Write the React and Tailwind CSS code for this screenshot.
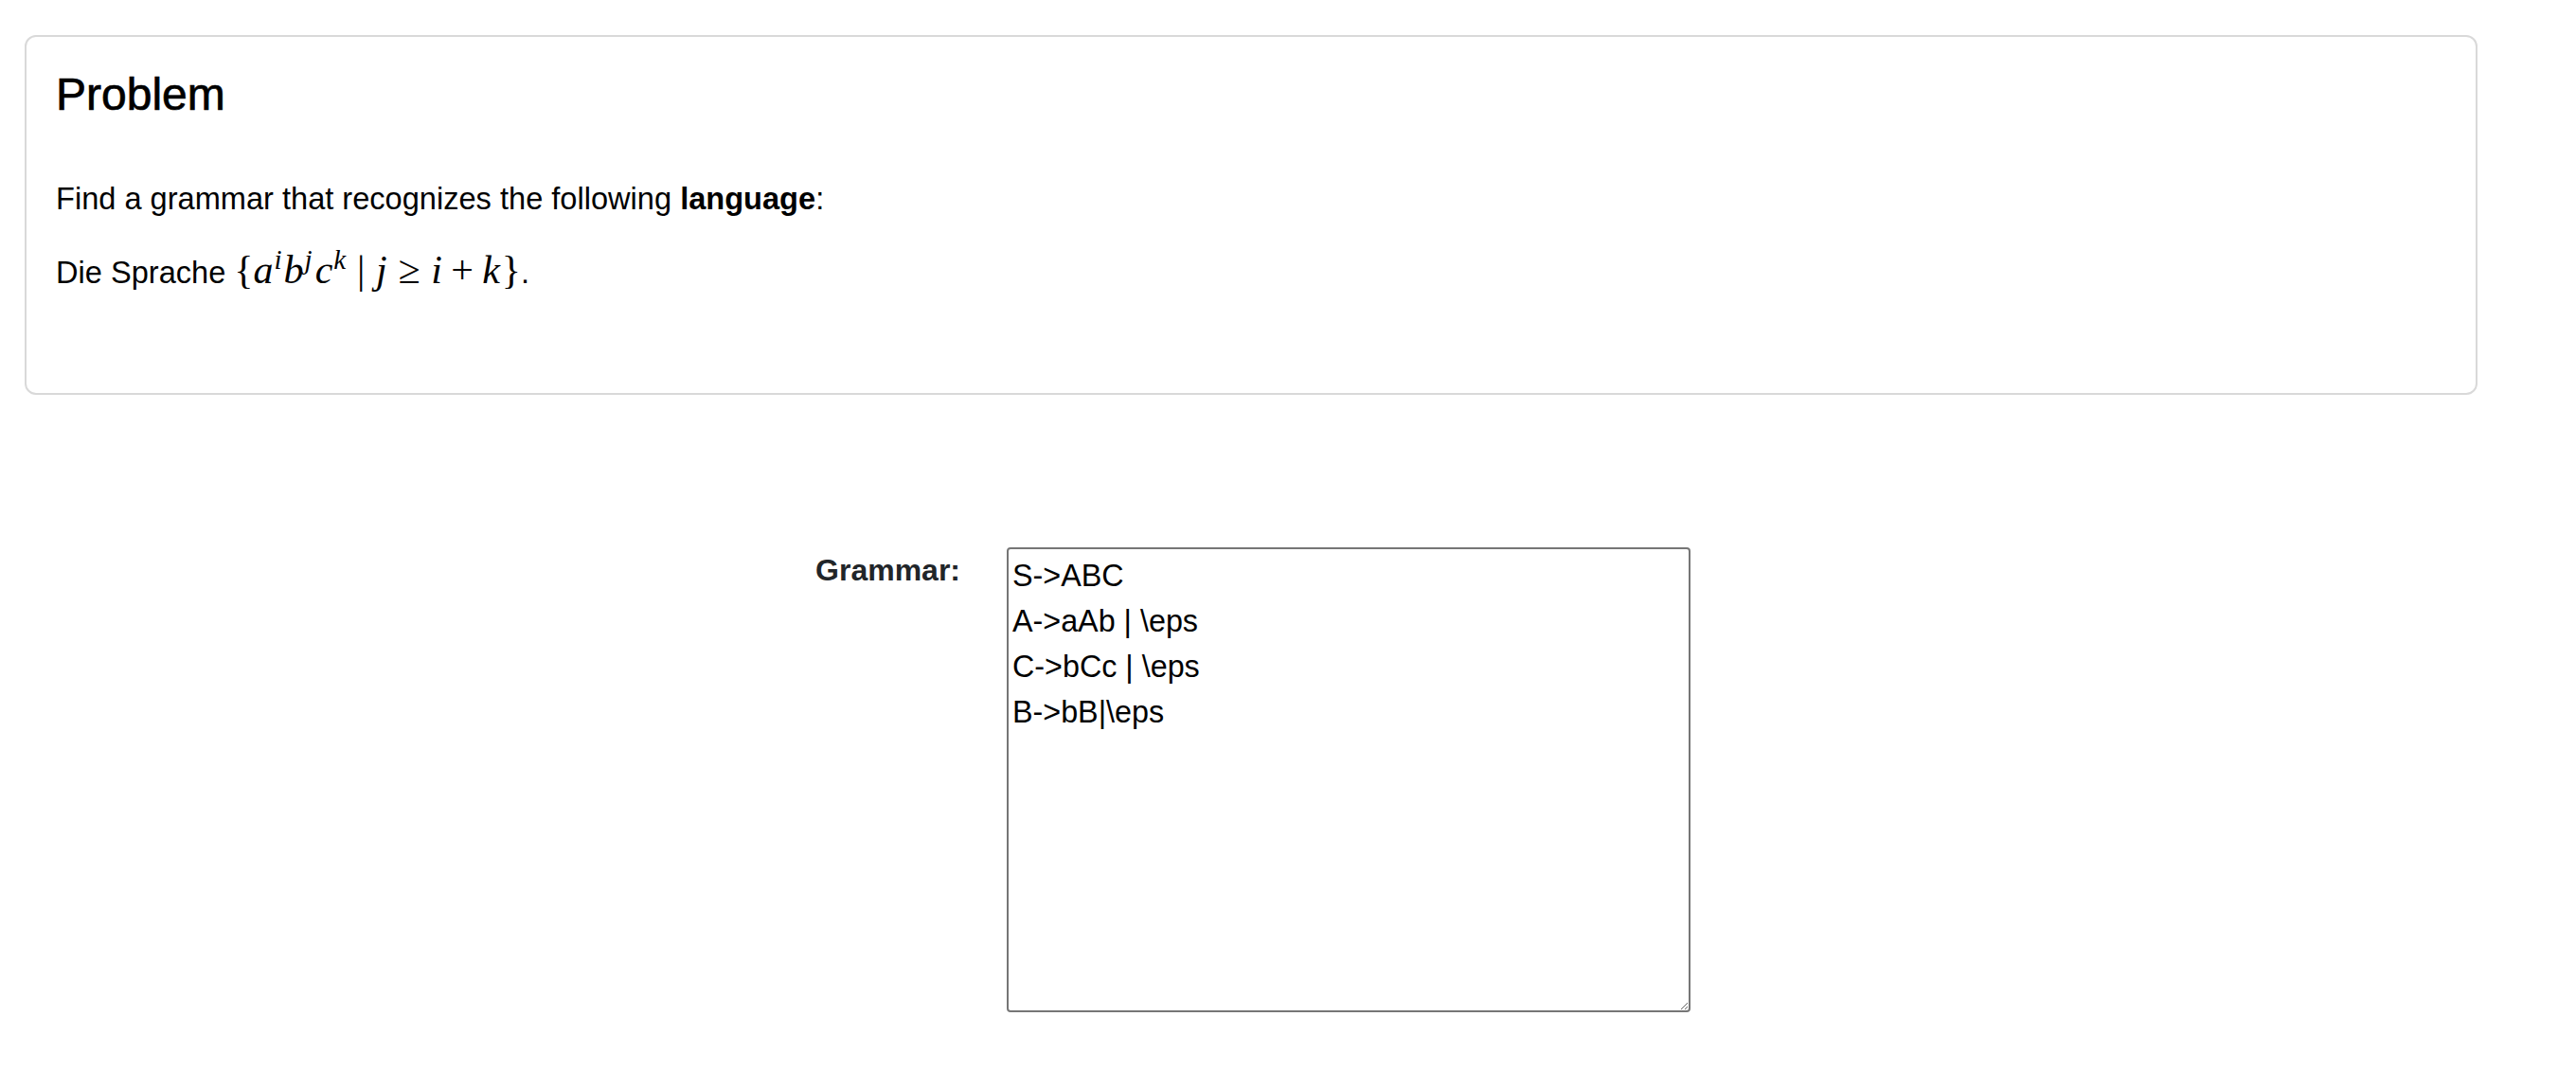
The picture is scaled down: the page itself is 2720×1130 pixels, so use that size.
import React from "react";

function LanguageFormula() {
  // KaTeX-like rendering of {a^i b^j c^k | j >= i + k}
  return (
    <span className="font-['Liberation_Serif',serif] text-[42px] leading-none whitespace-nowrap">
      <span>{"{"}</span>
      <i>a</i>
      <sup className="text-[29px] top-[-0.5em] italic ml-[1px]">i</sup>
      <i className="ml-[2px]">b</i>
      <sup className="text-[29px] top-[-0.5em] italic ml-[1px]">j</sup>
      <i className="ml-[3px]">c</i>
      <sup className="text-[29px] top-[-0.5em] italic ml-[1px]">k</sup>
      <span className="mx-[0.28em]">|</span>
      <i>j</i>
      <span className="mx-[0.28em]">≥</span>
      <i>i</i>
      <span className="mx-[0.22em]">+</span>
      <i>k</i>
      <span className="ml-[2px]">{"}"}</span>
    </span>
  );
}

export default function App() {
  const grammar = "S->ABC\nA->aAb | \\eps\nC->bCc | \\eps\nB->bB|\\eps";

  return (
    <div className="min-h-screen bg-white px-[26px] pt-[37px] font-['Liberation_Sans',Arial,sans-serif] text-black">
      <div className="w-[2590px] h-[380px] border-2 border-[#d9d9d9] rounded-[12px] px-[31px] pt-[32px]">
        <h4 className="text-[48px] leading-[1.2] font-normal mb-[57px] [-webkit-text-stroke:0.7px_black]">
          Problem
        </h4>
        <p className="text-[32.6px] leading-[48px] mb-[30px]">
          Find a grammar that recognizes the following <b>language</b>:
        </p>
        <p className="text-[32.6px] leading-[48px]">
          Die Sprache <LanguageFormula />.
        </p>
      </div>

      <div className="flex items-start mt-[161px]">
        <label
          htmlFor="grammar"
          className="w-[988px] text-right text-[32px] leading-[48px] font-bold text-[#212529]"
        >
          Grammar:
        </label>
        <textarea
          id="grammar"
          defaultValue={grammar}
          className="ml-[49px] w-[722px] h-[491px] border-2 border-[#767676] rounded-[4px] p-[4px] text-[32.3px] leading-[48px] text-black bg-white font-['Liberation_Sans',Arial,sans-serif]"
        />
      </div>
    </div>
  );
}
